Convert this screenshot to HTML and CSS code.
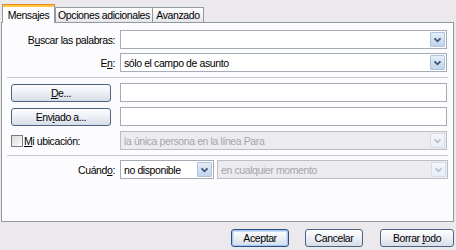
FILE: index.html
```html
<!DOCTYPE html>
<html lang="es">
<head>
<meta charset="utf-8">
<title>Búsqueda avanzada</title>
<link rel="stylesheet" href="styles.css">
</head>
<body>
<div class="dialog">
  <div class="tabs">
    <div class="tab active">Mensajes</div>
    <div class="tab t-opc">Opciones adicionales</div>
    <div class="tab t-ava">Avanzado</div>
  </div>
  <div class="panel">
    <div class="row r1">
      <div class="cell"><span class="lbl">B<u>u</u>scar las palabras:</span></div>
      <div class="combo"><span class="val"></span><span class="drop"><svg viewBox="0 0 9 6" width="9" height="6"><path d="M1.5 1.3 L4.5 4.3 L7.5 1.3" /></svg></span></div>
    </div>
    <div class="row r2">
      <div class="cell"><span class="lbl">E<u>n</u>:</span></div>
      <div class="combo"><span class="val">sólo el campo de asunto</span><span class="drop"><svg viewBox="0 0 9 6" width="9" height="6"><path d="M1.5 1.3 L4.5 4.3 L7.5 1.3" /></svg></span></div>
    </div>
    <div class="sep s1"></div>
    <div class="row r3">
      <div class="cell left"><span class="btn wide"><span><u>D</u>e...</span></span></div>
      <div class="field"></div>
    </div>
    <div class="row r4">
      <div class="cell left"><span class="btn wide"><span>Env<u>i</u>ado a...</span></span></div>
      <div class="field"></div>
    </div>
    <div class="row r5">
      <div class="cell left"><span class="check"></span><span class="lbl chk-lbl"><u>M</u>i ubicación:</span></div>
      <div class="combo disabled"><span class="val">la única persona en la línea Para</span><span class="drop"><svg viewBox="0 0 9 6" width="9" height="6"><path d="M1.5 1.3 L4.5 4.3 L7.5 1.3" /></svg></span></div>
    </div>
    <div class="sep s2"></div>
    <div class="row r6">
      <div class="cell"><span class="lbl">Cuánd<u>o</u>:</span></div>
      <div class="combo small"><span class="val">no disponible</span><span class="drop"><svg viewBox="0 0 9 6" width="9" height="6"><path d="M1.5 1.3 L4.5 4.3 L7.5 1.3" /></svg></span></div>
      <div class="combo disabled rest"><span class="val">en cualquier momento</span><span class="drop"><svg viewBox="0 0 9 6" width="9" height="6"><path d="M1.5 1.3 L4.5 4.3 L7.5 1.3" /></svg></span></div>
    </div>
  </div>
  <div class="actions">
    <span class="btn act default"><span>Aceptar</span></span>
    <span class="btn act cancel"><span>Cancelar</span></span>
    <span class="btn act clear"><span>Borrar <u>t</u>odo</span></span>
  </div>
</div>
</body>
</html>
```

FILE: styles.css
```css
* { box-sizing: border-box; }

html, body {
  margin: 0;
  padding: 0;
}

body {
  width: 456px;
  height: 250px;
  overflow: hidden;
  background: #ebe9ec;
  font-family: "Liberation Sans", Arial, sans-serif;
  font-size: 10.5px;
  letter-spacing: -0.4px;
  color: #000;
}

u { text-decoration: underline; text-underline-offset: 1px; }

.dialog {
  display: flex;
  flex-direction: column;
}

/* Tabs */
.tabs {
  display: flex;
  align-items: flex-end;
  height: 22px;
  padding-left: 2px;
  position: relative;
  z-index: 1;
}

.tab {
  height: 15px;
  border: 1px solid #919b9c;
  border-bottom: none;
  background: linear-gradient(#fefefe, #f1f1f4 60%, #e4e4ea);
  line-height: 14px;
  text-align: center;
  white-space: nowrap;
}

.tab.active {
  width: 53px;
  height: 19px;
  margin-bottom: -1px;
  background: #fcfcfe;
  border-top: 1px solid #e68b2c;
  box-shadow: inset 0 2px 0 #ffc73c;
  line-height: 18px;
  padding-top: 1px;
}

.t-opc { width: 98px; }
.t-ava { width: 52px; margin-left: -1px; }

/* Panel */
.panel {
  margin-left: 1px;
  width: 453px;
  height: 200px;
  border: 1px solid #919b9c;
  background: #fcfcfe;
  display: flex;
  flex-direction: column;
}

.row {
  display: flex;
  align-items: center;
  height: 19px;
}

.r1 { margin-top: 7px; }
.r2 { margin-top: 4px; }
.r3, .r4, .r5 { margin-top: 5px; }
.r6 { margin-top: 4px; }

.sep {
  height: 1px;
  margin: 5px 5px 0 5px;
  background: #c8c8cc;
}

.cell {
  width: 118px;
  flex: none;
  display: flex;
  justify-content: flex-end;
  align-items: center;
  padding-right: 5px;
}

.cell.left {
  justify-content: flex-start;
  padding-left: 9px;
}

.lbl { white-space: nowrap; }

.chk-lbl { margin-left: 1px; }

/* Fields */
.combo, .field {
  width: 327px;
  height: 19px;
  border: 1px solid #a5acb5;
  background: #fff;
  display: flex;
  align-items: center;
  padding-left: 3px;
}

.combo .val {
  flex: 1;
  white-space: nowrap;
  overflow: hidden;
}

.drop {
  width: 15px;
  height: 15px;
  margin-right: 1px;
  border: 1px solid #b0c3dd;
  border-radius: 1px;
  background: linear-gradient(#e6eef9, #d2e0f2 50%, #c1d3ec);
  display: flex;
  align-items: center;
  justify-content: center;
}

.drop svg path {
  fill: none;
  stroke: #3e5479;
  stroke-width: 1.8;
}

.combo.disabled {
  background: #ecebef;
  border-color: #bdbdc2;
  color: #a6a5aa;
}

.combo.disabled .drop {
  background: linear-gradient(#f3f6fb, #e9eef6);
  border-color: #d6dde8;
}

.combo.disabled .drop svg path { stroke: #b8c2d3; }

.combo.small { width: 94px; }

.combo.rest {
  width: 231px;
  margin-left: 3px;
}

/* Buttons */
.btn {
  display: inline-flex;
  align-items: center;
  justify-content: center;
  height: 18px;
  border: 1px solid #4e6283;
  border-radius: 3px;
  background: linear-gradient(#fdfdfe, #eef1f6 45%, #d6dde8);
  white-space: nowrap;
}

.btn.wide { width: 100px; }

.check {
  width: 12px;
  height: 12px;
  flex: none;
  border: 1px solid #6f7c8e;
  background: linear-gradient(135deg, #dcdcd6, #fcfcfb);
}

/* Action bar */
.actions {
  display: flex;
  justify-content: flex-end;
  padding-right: 2px;
  margin-top: 7px;
  gap: 16px;
}

.act { width: 58px; }
.act.clear { width: 74px; margin-left: 1px; }

.act.default {
  border-color: #2b4f85;
  box-shadow: inset 0 0 0 1px #a9c6ee, inset 0 0 0 2px #cfe0f6;
}
```
